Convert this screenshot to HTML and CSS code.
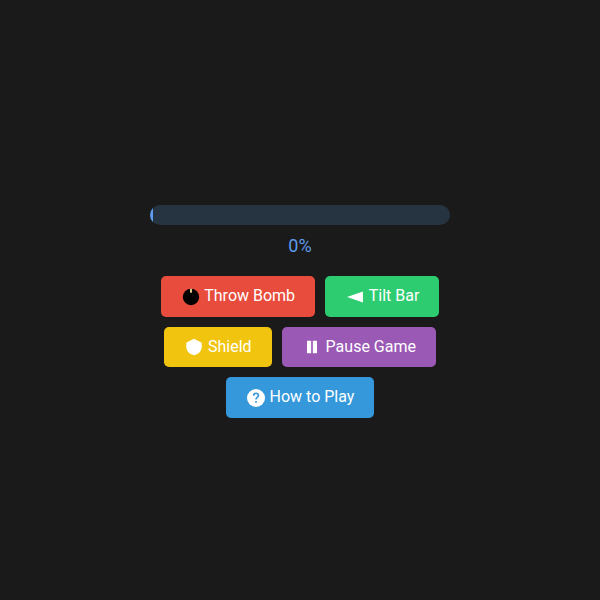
FILE: index.html
```
<!DOCTYPE html>
<html lang="en">
<head>
    <meta charset="UTF-8">
    <meta name="viewport" content="width=device-width, initial-scale=1.0">
    <title>Balance Game</title>
    <link rel="stylesheet" href="styles.css">
</head>
<body>
    <main class="game">
        <div class="progress" role="progressbar" aria-labelledby="progressText" aria-valuemin="0" aria-valuemax="100" aria-valuenow="0">
            <div class="progress-fill"></div>
        </div>
        <div class="progress-text" id="progressText">0%</div>
        <div class="controls">
            <button type="button" class="btn btn-bomb">
                <svg class="icon" viewBox="0 0 24 24" aria-hidden="true">
                    <circle cx="12" cy="12" r="9.8" fill="#000"/>
                    <path d="M12 2v5" stroke="#fff3a0" stroke-width="2"/>
                </svg>
                Throw Bomb
            </button>
            <button type="button" class="btn btn-tilt">
                <svg class="icon" viewBox="0 0 24 24" aria-hidden="true">
                    <path d="M2.500 12L21.500 5.500v13z" fill="#fff"/>
                </svg>
                Tilt Bar
            </button>
            <button type="button" class="btn btn-shield">
                <svg class="icon" viewBox="0 0 24 24" aria-hidden="true">
                    <path d="M12 2L21 6.500q1 5.500-.5 9Q18 20.500 12 22 6 20.500 3.500 15.500 2 12 3 6.500z" fill="#fff"/>
                </svg>
                Shield
            </button>
            <button type="button" class="btn btn-pause">
                <svg class="icon" viewBox="0 0 24 24" aria-hidden="true">
                    <path d="M6 4.500h5v15H6zM13 4.500h5v15h-5z" fill="#fff"/>
                </svg>
                Pause Game
            </button>
            <button type="button" class="btn btn-help">
                <svg class="icon" viewBox="0 0 24 24" aria-hidden="true">
                    <circle cx="12" cy="12" r="10.800" fill="#fff"/>
                    <path d="M9.300 9.200c0-3.900 5.600-3.800 5.600-.3 0 2.400-2.900 2.500-2.900 5M12 15.500v2.200" fill="none" stroke="#3498db" stroke-width="2"/>
                </svg>
                How to Play
            </button>
        </div>
    </main>
</body>
</html>
```
FILE: styles.css
```
* {
    box-sizing: border-box;
}
body {
    margin: 0;
    min-height: 100vh;
    display: flex;
    justify-content: center;
    align-items: center;
    background-color: #1a1a1a;
    font-family: Roboto, sans-serif;
}
.game {
    width: 50%;
    min-width: 300px;
    padding-top: 23px;
}
.progress {
    height: 20px;
    border-radius: 10px;
    background-color: #263340;
    overflow: hidden;
}
.progress-fill {
    width: 1%;
    height: 100%;
    background-color: #5d9cec;
}
.progress-text {
    margin: 10px 0 20px;
    font-size: 18px;
    line-height: 21px;
    text-align: center;
    color: #5d9cec;
}
.controls {
    display: flex;
    flex-wrap: wrap;
    justify-content: center;
    gap: 10px;
}
.btn {
    padding: 10px 20px;
    border: none;
    border-radius: 5px;
    font-family: inherit;
    font-size: 16px;
    color: white;
    cursor: pointer;
}
.btn:hover {
    opacity: 0.9;
}
.icon {
    width: 20px;
    height: 20px;
    vertical-align: middle;
}
.btn-bomb {
    background-color: #e74c3c;
}
.btn-tilt {
    background-color: #2ecc71;
}
.btn-shield {
    background-color: #f1c40f;
}
.btn-pause {
    background-color: #9b59b6;
}
.btn-help {
    background-color: #3498db;
}
```
